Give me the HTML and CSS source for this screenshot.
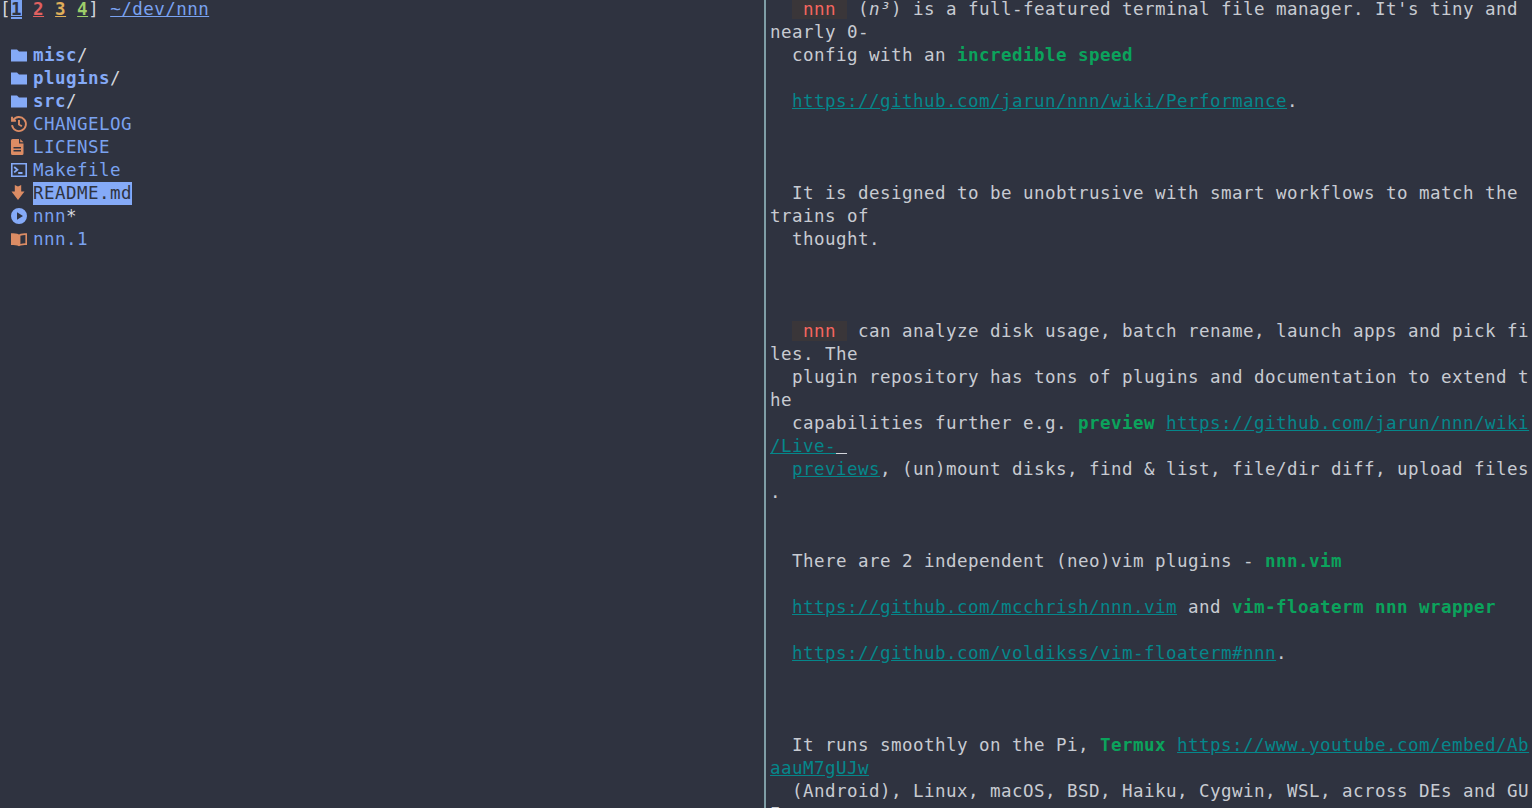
FILE: index.html
```html
<!DOCTYPE html>
<html lang="en">
<head>
<meta charset="utf-8">
<title>nnn</title>
<link rel="stylesheet" href="styles.css">
</head>
<body>
<div class="term">
  <section class="left">
    <div class="row">[<span class="tab cur">1</span> <span class="tab red">2</span> <span class="tab yel">3</span> <span class="tab grn">4</span>] <span class="path">~/dev/nnn</span></div>
    <div class="row"></div>
    <div class="row entry"><svg class="ic" viewBox="0 0 16 16"><path class="blue" d="M0 2.500h6l2 2h8v10H0z"/></svg><b class="name">misc</b>/</div>
    <div class="row entry"><svg class="ic" viewBox="0 0 16 16"><path class="blue" d="M0 2.500h6l2 2h8v10H0z"/></svg><b class="name">plugins</b>/</div>
    <div class="row entry"><svg class="ic" viewBox="0 0 16 16"><path class="blue" d="M0 2.500h6l2 2h8v10H0z"/></svg><b class="name">src</b>/</div>
    <div class="row entry"><svg class="ic" viewBox="0 0 16 16"><path class="orange-line" d="M2.200 4A7 7 0 1 1 1 9.200M1 .8v3.900h3.900M8 4v4.500l2.900 1.800"/></svg><span class="name">CHANGELOG</span></div>
    <div class="row entry"><svg class="ic" viewBox="0 0 16 16"><path class="orange" fill-rule="evenodd" d="M1.500 0H8v4.500h4.500V14.500a1.500 1.500 0 0 1-1.500 1.500H1.500A1.500 1.500 0 0 1 0 14.500V1.500A1.500 1.500 0 0 1 1.500 0zM9.200 0l3.300 3.300H9.200zM2.500 8v1.400h7.500V8zM2.500 11v1.400h7.500V11z"/></svg><span class="name">LICENSE</span></div>
    <div class="row entry"><svg class="ic" viewBox="0 0 16 16"><path class="blue-line" d="M.8 1.800h14.400v12.400H.8z"/><path class="blue-bold" d="M3.200 5l3.200 2.700-3.200 2.700M7.200 11h4.300"/></svg><span class="name">Makefile</span></div>
    <div class="row entry"><svg class="ic" viewBox="0 0 16 16"><path class="orange" d="M3.800 0L7 1.600 10.200 0V6.500h3.300L7 15 .5 6.500h3.300z"/></svg><span class="name sel">README.md</span></div>
    <div class="row entry"><svg class="ic" viewBox="0 0 16 16"><path class="blue" fill-rule="evenodd" d="M8 0a8 8 0 1 1 0 16A8 8 0 0 1 8 0zM6 4.200v7.600L12 8z"/></svg><span class="name">nnn</span>*</div>
    <div class="row entry"><svg class="ic" viewBox="0 0 17 16"><path class="orange" fill-rule="evenodd" d="M0 2c3.200 0 6.300.2 8.500 1.300C10.700 2.200 13.800 2 17 2v12.500c-3.200 0-6.300.2-8.500 1.300C6.300 14.700 3.200 14.500 0 14.500zM10 4.600v8.700c1.500-.5 3.300-.7 5.300-.8V3.800c-2 .1-3.800.3-5.300.8z"/></svg><span class="name">nnn.1</span></div>
  </section>
  <div class="divider"></div>
  <section class="right">
<div class="row">  <span class="code"> nnn </span> (<i>n³</i>) is a full-featured terminal file manager. It's tiny and</div>
<div class="row">nearly 0-</div>
<div class="row">  config with an <b class="st">incredible speed</b></div>
<div class="row"></div>
<div class="row">  <a class="lnk">https://github.com/jarun/nnn/wiki/Performance</a>.</div>
<div class="row"></div>
<div class="row"></div>
<div class="row"></div>
<div class="row">  It is designed to be unobtrusive with smart workflows to match the</div>
<div class="row">trains of</div>
<div class="row">  thought.</div>
<div class="row"></div>
<div class="row"></div>
<div class="row"></div>
<div class="row">  <span class="code"> nnn </span> can analyze disk usage, batch rename, launch apps and pick fi</div>
<div class="row">les. The</div>
<div class="row">  plugin repository has tons of plugins and documentation to extend t</div>
<div class="row">he</div>
<div class="row">  capabilities further e.g. <b class="st">preview</b> <a class="lnk">https://github.com/jarun/nnn/wiki</a></div>
<div class="row"><a class="lnk">/Live-</a><span class="under"> </span></div>
<div class="row">  <a class="lnk">previews</a>, (un)mount disks, find &amp; list, file/dir diff, upload files</div>
<div class="row">.</div>
<div class="row"></div>
<div class="row"></div>
<div class="row">  There are 2 independent (neo)vim plugins - <b class="st">nnn.vim</b></div>
<div class="row"></div>
<div class="row">  <a class="lnk">https://github.com/mcchrish/nnn.vim</a> and <b class="st">vim-floaterm nnn wrapper</b></div>
<div class="row"></div>
<div class="row">  <a class="lnk">https://github.com/voldikss/vim-floaterm#nnn</a>.</div>
<div class="row"></div>
<div class="row"></div>
<div class="row"></div>
<div class="row">  It runs smoothly on the Pi, <b class="st">Termux</b> <a class="lnk">https://www.youtube.com/embed/Ab</a></div>
<div class="row"><a class="lnk">aauM7gUJw</a></div>
<div class="row">  (Android), Linux, macOS, BSD, Haiku, Cygwin, WSL, across DEs and GU</div>
<div class="row">I</div>
  </section>
</div>
</body>
</html>
```

FILE: styles.css
```css
* { box-sizing: border-box; }
html, body { margin: 0; height: 100%; overflow: hidden; background: #2f3340; }
.term {
  display: flex;
  height: 808px;
  overflow: hidden;
  color: #d3d6dc;
  font-family: "DejaVu Sans Mono", monospace;
  font-size: 17.5px;
  letter-spacing: 0.465px;
  line-height: 19px;
}
.left { width: 764px; flex: none; }
.divider { width: 2px; flex: none; background: #7f9ea6; }
.right { flex: 1; min-width: 0; padding-left: 4px; color: #c8cbd2; }
.row { height: 23px; white-space: pre; }
.entry { display: flex; align-items: flex-start; }
.entry .ic { margin: 1px 6px 0 11px; }
.ic { width: 16px; height: 16px; flex: none; overflow: visible; }
.blue { fill: #85aaf7; }
.orange { fill: #dc8c64; }
.orange-line { fill: none; stroke: #dc8c64; stroke-width: 1.9; }
.blue-line { fill: none; stroke: #85aaf7; stroke-width: 1.6; }
.blue-bold { fill: none; stroke: #85aaf7; stroke-width: 1.8; }
.name { color: #7aa2f0; }
b.name { color: #85aaf7; }
.sel { background: #85aaf7; color: #2f3340; margin-top: -2px; padding: 2px 0; height: 23px; }
.tab { font-weight: bold; text-decoration: underline; }
.cur { background: #7aa2f0; color: #2f3340; }
.red { color: #e06060; }
.yel { color: #e0af5a; }
.grn { color: #9ece6a; }
.path { color: #7aa2f0; text-decoration: underline; }
.code { background: #3a3639; color: #f7665f; }
.st { color: #0ba35c; }
.lnk { color: #05878b; text-decoration: underline; }
.under { text-decoration: underline; color: #d3d6dc; }
i { font-style: italic; }
```
